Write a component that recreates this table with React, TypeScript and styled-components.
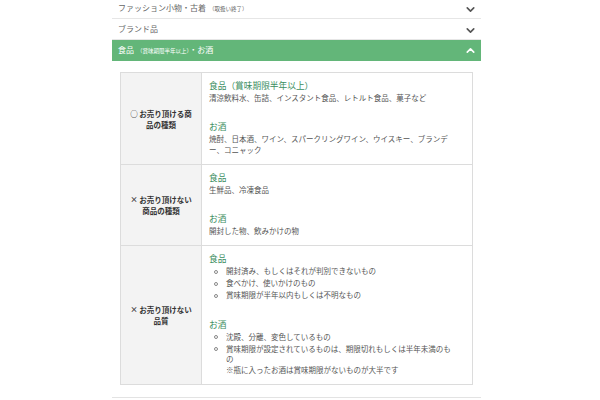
import React from "react";
import styled, { createGlobalStyle } from "styled-components";
import { ChevronDown, ChevronUp } from "lucide-react";

const GlobalStyle = createGlobalStyle`
  *, *::before, *::after { box-sizing: border-box; }
  html, body { margin: 0; padding: 0; background: #fff; }
  body {
    font-family: "Noto Sans CJK JP", "Noto Sans", sans-serif;
    line-break: normal;
    word-break: normal;
  }
`;

const Page = styled.div`
  width: 600px;
  height: 400px;
  overflow: hidden;
  background: #fff;
  display: flex;
  padding-left: 112px;
`;

const Accordion = styled.div`
  width: 369px;
  margin-top: -2px;
  display: flex;
  flex-direction: column;
`;

const Header = styled.div<{ $open?: boolean }>`
  height: 21px;
  flex-shrink: 0;
  display: flex;
  align-items: center;
  justify-content: space-between;
  padding: 0 4px 0 6px;
  background: ${(p) => (p.$open ? "#63b679" : "#fff")};
  color: ${(p) => (p.$open ? "#fff" : "#666")};
  border-bottom: ${(p) => (p.$open ? "none" : "1px solid #e6e6e6")};
`;

const Title = styled.span`
  font-size: 8px;
  line-height: 1;
  white-space: nowrap;
`;

const Small = styled.span`
  font-size: 5.5px;
  margin-left: 3px;
`;

const Chevron = styled.span<{ $open?: boolean }>`
  display: flex;
  margin-top: ${(p) => (p.$open ? 0 : 3)}px;
  color: ${(p) => (p.$open ? "#fff" : "#555")};
`;

const Panel = styled.div`
  padding: 11px 8px 12px;
  border-bottom: 1px solid #e3e3e3;
`;

const Table = styled.div`
  border: 1px solid #dcdcdc;
  display: flex;
  flex-direction: column;
`;

const Row = styled.div`
  display: grid;
  grid-template-columns: 81px 1fr;
  & + & {
    border-top: 1px solid #dcdcdc;
  }
`;

const Label = styled.div`
  background: #f3f3f3;
  border-right: 1px solid #dcdcdc;
  display: flex;
  align-items: center;
  justify-content: center;
  text-align: center;
  padding: 0 8px;
  font-size: 7.5px;
  font-weight: bold;
  line-height: 11px;
  color: #333;
`;

const Content = styled.div`
  padding: 6px 19px 9px 7px;
`;

const Section = styled.div`
  & + & {
    margin-top: 17px;
  }
`;

const Heading = styled.div`
  font-size: 8.7px;
  line-height: 13px;
  color: #3b8e60;
`;

const Body = styled.p`
  margin: 0;
  font-size: 7.5px;
  line-height: 11px;
  color: #555;
`;

const List = styled.ul`
  margin: 1px 0 0;
  padding: 0;
  list-style: none;
`;

const Item = styled.li`
  position: relative;
  padding-left: 17px;
  font-size: 7.5px;
  line-height: 10.5px;
  color: #555;
  & + & {
    margin-top: 1.5px;
  }
  &::before {
    content: "";
    position: absolute;
    left: 5px;
    top: 3.5px;
    width: 4px;
    height: 4px;
    border: 1px solid #888;
    border-radius: 50%;
  }
`;

type Sec = { title: string; text?: string; items?: React.ReactNode[] };
type RowData = { label: string; sections: Sec[] };

const rows: RowData[] = [
  {
    label: "○ お売り頂ける商品の種類",
    sections: [
      {
        title: "食品（賞味期限半年以上）",
        text: "清涼飲料水、缶詰、インスタント食品、レトルト食品、菓子など",
      },
      {
        title: "お酒",
        text: "焼酎、日本酒、ワイン、スパークリングワイン、ウイスキー、ブランデー、コニャック",
      },
    ],
  },
  {
    label: "× お売り頂けない商品の種類",
    sections: [
      { title: "食品", text: "生鮮品、冷凍食品" },
      { title: "お酒", text: "開封した物、飲みかけの物" },
    ],
  },
  {
    label: "× お売り頂けない品質",
    sections: [
      {
        title: "食品",
        items: [
          "開封済み、もしくはそれが判別できないもの",
          "食べかけ、使いかけのもの",
          "賞味期限が半年以内もしくは不明なもの",
        ],
      },
      {
        title: "お酒",
        items: [
          "沈殿、分離、変色しているもの",
          <>
            賞味期限が設定されているものは、期限切れもしくは半年未満のもの
            <br />
            ※瓶に入ったお酒は賞味期限がないものが大半です
          </>,
        ],
      },
    ],
  },
];

export default function App() {
  return (
    <>
      <GlobalStyle />
      <Page lang="ja">
        <Accordion>
          <Header>
            <Title>
              ファッション小物・古着<Small>（取扱い終了）</Small>
            </Title>
            <Chevron>
              <ChevronDown size={13} strokeWidth={3} />
            </Chevron>
          </Header>
          <Header>
            <Title>ブランド品</Title>
            <Chevron>
              <ChevronDown size={13} strokeWidth={3} />
            </Chevron>
          </Header>
          <Header $open>
            <Title>
              食品<Small>（賞味期限半年以上）</Small>・お酒
            </Title>
            <Chevron $open>
              <ChevronUp size={13} strokeWidth={3} />
            </Chevron>
          </Header>
          <Panel>
            <Table>
              {rows.map((r, i) => (
                <Row key={i}>
                  <Label>{r.label}</Label>
                  <Content>
                    {r.sections.map((s, j) => (
                      <Section key={j}>
                        <Heading>{s.title}</Heading>
                        {s.text && <Body>{s.text}</Body>}
                        {s.items && (
                          <List>
                            {s.items.map((it, k) => (
                              <Item key={k}>{it}</Item>
                            ))}
                          </List>
                        )}
                      </Section>
                    ))}
                  </Content>
                </Row>
              ))}
            </Table>
          </Panel>
        </Accordion>
      </Page>
    </>
  );
}
